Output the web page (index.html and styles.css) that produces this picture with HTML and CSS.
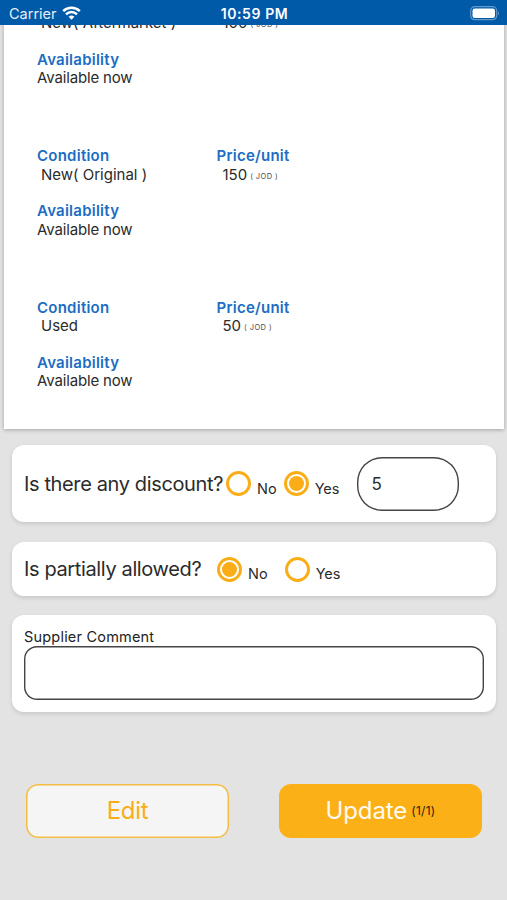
FILE: index.html
```html
<!DOCTYPE html>
<html lang="en">
<head>
<meta charset="utf-8">
<title>Offer</title>
<link rel="stylesheet" href="styles.css">
</head>
<body>
<header class="status">
  <div class="carrier"><span class="carrier-name">Carrier</span>
    <svg class="wifi" width="19" height="14" viewBox="0 0 19 14"><path d="M9.500 13.700 6.600 10.700a4.300 4.300 0 0 1 5.800 0Z" fill="#fff"/><path d="M4 8.300a8 8 0 0 1 11 0M1.200 5.200a12 12 0 0 1 16.600 0" fill="none" stroke="#fff" stroke-width="2.500"/></svg>
  </div>
  <div class="clock">10:59 PM</div>
  <svg class="battery" width="30" height="15" viewBox="0 0 30 15"><rect x=".7" y=".7" width="26" height="13" rx="4" fill="none" stroke="#6298cb" stroke-width="1.200"/><rect x="2.500" y="2.500" width="22.500" height="9.500" rx="2.300" fill="#fff"/><path d="M28 5q2 2.200 0 4.500Z" fill="#6298cb"/></svg>
</header>
<main>
  <div class="scroller">
    <section class="offers">
      <article class="offer">
        <div class="row"><div class="cell"><h3>Condition</h3><p class="cond">New( Aftermarket )</p></div><div><h3>Price/unit</h3><p class="price"><span class="amount">100</span><small>( JOD )</small></p></div></div>
        <div class="avail"><h3>Availability</h3><p class="now">Available now</p></div>
      </article>
      <article class="offer">
        <div class="row"><div class="cell"><h3>Condition</h3><p class="cond">New( Original )</p></div><div><h3>Price/unit</h3><p class="price"><span class="amount">150</span><small>( JOD )</small></p></div></div>
        <div class="avail"><h3>Availability</h3><p class="now">Available now</p></div>
      </article>
      <article class="offer">
        <div class="row"><div class="cell"><h3>Condition</h3><p class="cond">Used</p></div><div><h3>Price/unit</h3><p class="price"><span class="amount">50</span><small>( JOD )</small></p></div></div>
        <div class="avail"><h3>Availability</h3><p class="now">Available now</p></div>
      </article>
    </section>
  </div>
  <section class="card discount">
    <span class="question q-discount">Is there any discount?</span>
    <span class="radio"></span><span class="option">No</span>
    <span class="radio on second"></span><span class="option">Yes</span>
    <div class="amount-box">5</div>
  </section>
  <section class="card partial">
    <span class="question q-partial">Is partially allowed?</span>
    <span class="radio on"></span><span class="option">No</span>
    <span class="radio second"></span><span class="option">Yes</span>
  </section>
  <section class="card comment">
    <div class="comment-label">Supplier Comment</div>
    <div class="comment-box"></div>
  </section>
  <div class="actions">
    <div class="btn edit">Edit</div>
    <div class="btn update"><span>Update</span><span class="count">(1/1)</span></div>
  </div>
</main>
</body>
</html>
```
FILE: styles.css
```css
* { box-sizing: border-box; }
body {
  margin: 0; width: 507px; height: 900px; overflow: hidden;
  background: #e3e3e3; color: #2b2b2b;
  font-family: Inter, "Liberation Sans", sans-serif;
}
h3, p { margin: 0; }
.status {
  height: 25px; background: #005aa8; color: #fff;
  display: grid; grid-template-columns: 1fr auto 1fr; align-items: center;
  padding: 2px 7px 0 9px; font-size: 14.500px; line-height: 20px;
}
.carrier { display: flex; align-items: center; gap: 5px; color: #e4eef8; }
.wifi { display: block; margin-top: -2px; }
.clock { font-weight: 600; font-size: 14px; letter-spacing: .6px; }
.battery { justify-self: end; margin-top: -1px; }
.scroller { height: 412px; overflow: hidden; padding: 0 3px 0 4px; }
.offers {
  height: 433px; margin-top: -29.500px; padding: 0 33px; background: #fff;
  box-shadow: 0 1px 4px rgba(0, 0, 0, .28);
}
.offer { height: 151.500px; font-size: 15px; line-height: 18.500px; }
.row { display: flex; height: 55px; }
.cell { width: 179.500px; }
h3 { font-size: 15px; line-height: 18.500px; font-weight: 600; letter-spacing: .25px; color: #1c6dc4; }
.now { letter-spacing: -.15px; }
.cond { padding-left: 4px; }
.price { display: flex; padding-left: 6px; }
.price small { font-size: 7.500px; margin-left: 3px; padding-top: 2px; letter-spacing: .4px; color: #4a4a4a; }
.card {
  margin: 0 11px 0 12px; background: #fff; border-radius: 12px;
  box-shadow: 0 2px 4px rgba(0, 0, 0, .12); padding: 0 12px;
}
.discount { margin-top: 8px; height: 77px; display: flex; align-items: center; }
.partial { margin-top: 20px; height: 54px; display: flex; align-items: center; }
.question { font-size: 20px; line-height: 26px; letter-spacing: -.37px; white-space: nowrap; flex: none; }
.q-discount { width: 202px; }
.q-partial { width: 193px; }
.radio {
  flex: none; width: 25px; height: 25px; border-radius: 50%;
  border: 3px solid #fbad18; display: grid; place-items: center;
}
.on::after { content: ""; width: 15px; height: 15px; border-radius: 50%; background: #fbad18; }
.option { font-size: 14.500px; line-height: 18px; padding: 10px 0 0 6px; }
.discount .second { margin-left: 7px; }
.partial .second { margin-left: 17px; }
.amount-box {
  margin-left: 18px; width: 102px; height: 54px; box-shadow: inset 0 0 0 1.400px #444;
  border-radius: 25px; padding-left: 14px; font-size: 17px; line-height: 54px;
}
.comment { margin-top: 19px; height: 97px; padding-top: 12px; }
.comment-label { font-size: 14.500px; line-height: 19px; letter-spacing: .2px; color: #222; }
.comment-box { height: 54px; box-shadow: inset 0 0 0 1.400px #444; border-radius: 13px; }
.actions { display: flex; justify-content: space-between; padding: 71.500px 25px 0 26px; }
.btn {
  width: 203px; height: 54px; border-radius: 12px; font-size: 24px;
  display: flex; align-items: center; justify-content: center;
}
.edit { background: #f5f5f5; box-shadow: inset 0 0 0 1.500px #f5bd45; color: #fbad18; letter-spacing: -.3px; }
.update { background: #fcb017; color: #fffaf0; gap: 4px; letter-spacing: -.1px; }
.count { font-size: 12px; letter-spacing: .3px; color: #2c210b; }
```
